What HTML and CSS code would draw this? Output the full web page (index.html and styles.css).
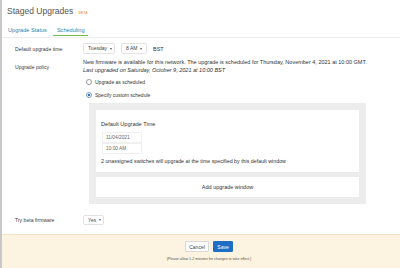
FILE: index.html
```html
<!DOCTYPE html>
<html lang="en">
<head>
  <meta charset="UTF-8" />
  <title>Staged Upgrades</title>
  <link rel="stylesheet" href="styles.css">
</head>
<body>
  <div class="page">
    <h1 class="title">Staged Upgrades <span class="beta">BETA</span></h1>

    <nav class="tabs">
      <a class="tab">Upgrade Status</a>
      <a class="tab active">Scheduling</a>
    </nav>

    <div class="form">
      <div class="row row-time">
        <div class="label">Default upgrade time</div>
        <div class="field inline">
          <span class="select sel-day">Tuesday <i class="caret"></i></span>
          <span class="select sel-hour">8 AM <i class="caret"></i></span>
          <span class="tz">BST</span>
        </div>
      </div>

      <div class="row row-policy">
        <div class="label label-policy">Upgrade policy</div>
        <div class="field">
          <p class="note">New firmware is available for this network. The upgrade is scheduled for Thursday, November 4, 2021 at 10:00 GMT.</p>
          <p class="note last">Last upgraded on Saturday, October 9, 2021 at 10:00 BST</p>

          <label class="radio"><span class="dot"></span>Upgrade as scheduled</label>
          <label class="radio"><span class="dot on"></span>Specify custom schedule</label>

          <div class="schedule">
            <div class="window">
              <div class="window-title">Default Upgrade Time</div>
              <div class="input">11/04/2021</div>
              <div class="input">10:00 AM</div>
              <div class="window-note">2 unassigned switches will upgrade at the time specified by this default window</div>
            </div>
            <div class="add-window">Add upgrade window</div>
          </div>
        </div>
      </div>

      <div class="row row-beta">
        <div class="label">Try beta firmware</div>
        <div class="field inline">
          <span class="select sel-yes">Yes <i class="caret"></i></span>
        </div>
      </div>
    </div>

    <footer class="savebar">
      <div class="buttons">
        <button class="btn">Cancel</button>
        <button class="btn primary">Save</button>
      </div>
      <div class="hint">(Please allow 1-2 minutes for changes to take effect.)</div>
    </footer>
  </div>
</body>
</html>
```

FILE: styles.css
```css
body {
  margin: 0;
  background: #ffffff;
  font-family: "Liberation Sans", Arial, sans-serif;
  color: #333;
}
.page {
  border-left: 2px solid #c8c8c8;
  height: 268px;
  overflow: hidden;
  display: flex;
  flex-direction: column;
}
.title {
  margin: 0;
  padding: 6px 0 0 5px;
  height: 10px;
  font-size: 8.5px;
  line-height: 10px;
  font-weight: normal;
  color: #555;
}
.beta {
  font-size: 3.6px;
  color: #e8912c;
  vertical-align: top;
  position: relative;
  top: 2px;
  margin-left: 3px;
}
.tabs {
  margin-top: 8px;
  height: 13px;
  border-bottom: 1px solid #ededed;
  display: flex;
  padding-left: 6px;
}
.tab {
  font-size: 5.6px;
  line-height: 8px;
  color: #2f7fa8;
  padding: 2px 4px 0 0;
  margin-right: 6px;
}
.tab.active {
  margin-left: -4px;
  padding: 2px 3px 0 4px;
  border-bottom: 1.5px solid #74b94c;
  height: 9px;
}
.form {
  padding-left: 13px;
  font-size: 5.5px;
  line-height: 8px;
}
.row {
  display: flex;
}
.label {
  width: 68px;
  font-size: 5.1px;
  color: #3a3a3a;
}
.field {
  flex: 1;
}
.inline {
  display: flex;
  align-items: center;
}
.row-time {
  margin-top: 5px;
  height: 11px;
  align-items: center;
}
.select {
  box-sizing: border-box;
  height: 11px;
  border: 1px solid #e2e2e2;
  border-radius: 2px;
  font-size: 5px;
  line-height: 9px;
  padding-left: 4px;
  display: flex;
  align-items: center;
  color: #444;
}
.sel-day {
  width: 32px;
}
.sel-hour {
  width: 26px;
  margin-left: 6px;
}
.sel-yes {
  width: 21px;
}
.caret {
  display: inline-block;
  margin-left: 3px;
  border-left: 1.5px solid transparent;
  border-right: 1.5px solid transparent;
  border-top: 2px solid #555;
}
.tz {
  margin-left: 6px;
  font-size: 5.5px;
}
.row-policy {
  margin-top: 4px;
}
.label-policy {
  padding-top: 5px;
}
.note {
  margin: 0;
}
.last {
  font-style: italic;
}
.radio {
  display: flex;
  align-items: center;
  height: 8px;
  margin-top: 4px;
  padding-left: 3px;
  font-size: 5px;
}
.radio + .radio {
  margin-top: 5px;
}
.dot {
  box-sizing: border-box;
  width: 6px;
  height: 6px;
  border: 1px solid #9a9a9a;
  border-radius: 50%;
  margin-right: 3px;
  background: #fff;
}
.dot.on {
  border-color: #7a9cc0;
  background: radial-gradient(circle, #2a6fc0 0 1.2px, #fff 1.6px);
}
.schedule {
  margin: 4px 0 0 6px;
  width: 277px;
  box-sizing: border-box;
  background: #ececec;
  padding: 7px;
}
.window {
  background: #fff;
  padding: 10px 5px 7px;
}
.window-title {
  font-size: 5.6px;
}
.input {
  box-sizing: border-box;
  width: 40px;
  height: 11px;
  margin-left: 1px;
  border: 1px solid #f0f0f0;
  padding-left: 3px;
  font-size: 4.8px;
  line-height: 9px;
  color: #666;
}
.window-title + .input {
  margin-top: 4px;
}
.window-note {
  margin-top: 3px;
  font-size: 5.3px;
}
.add-window {
  margin-top: 5px;
  background: #fff;
  height: 20px;
  line-height: 20px;
  text-align: center;
  font-size: 5.5px;
}
.row-beta {
  margin-top: 11px;
  height: 10px;
  align-items: center;
}
.row-beta .select {
  height: 10px;
}
.savebar {
  margin-top: 9px;
  flex: 1;
  background: #fcf3e0;
  border-top: 1px solid #f2e4c6;
  padding: 6px 0 0 16px;
  text-align: center;
}
.buttons {
  display: flex;
  justify-content: center;
  gap: 4px;
}
.btn {
  font-family: inherit;
  height: 11px;
  padding: 0;
  border: 1px solid #d8d8d8;
  border-radius: 1px;
  background: #fff;
  color: #444;
  font-size: 5px;
  width: 24px;
}
.btn.primary {
  width: 20px;
  background: #1f6ec6;
  border-color: #1f6ec6;
  color: #fff;
}
.hint {
  margin-top: 4px;
  font-size: 3.6px;
  line-height: 6px;
  color: #555;
}
```
